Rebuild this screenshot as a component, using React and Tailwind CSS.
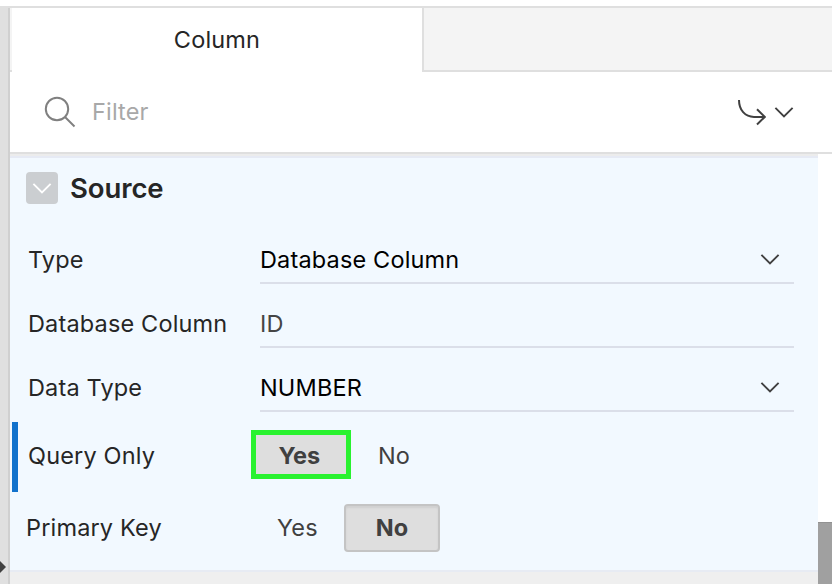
function Chevron({ className }) {
  return (
    <svg className={className} width="20" height="12" viewBox="0 0 20 12" fill="none" stroke="currentColor" strokeWidth="1.9">
      <path d="M1.4 1.8 10 10.4 18.6 1.8" />
    </svg>
  );
}

function FieldRow({ label, value, select, muted }) {
  return (
    <div className="flex h-16 pl-[18px] pr-6">
      <div className="w-[232px] shrink-0 pt-[24px] leading-8 text-[#262626]">{label}</div>
      <div className={`flex flex-1 justify-between border-b-2 border-[#dbdfe9] pt-[24px] leading-8 ${muted ? "text-[#454545]" : "text-black"}`}>
        <span>{value}</span>
        {select && <Chevron className="mr-[14px] mt-[9px] text-[#404040]" />}
      </div>
    </div>
  );
}

export default function App() {
  return (
    <div className="h-[584px] w-[832px] overflow-hidden bg-white pt-1.5 font-['Inter',sans-serif] text-[23.5px] font-[430] tracking-[0.16px] whitespace-nowrap">
      <div className="flex h-[578px] border-t-2 border-[#dfdfdf]">
        <div className="-mt-0.5 flex w-2 shrink-0 items-end bg-[#e0e0e0]">
          <svg width="8" height="28" viewBox="0 0 8 28" fill="#404040">
            <path d="M0 5 6 11 0 17Z" />
          </svg>
        </div>
        <div className="flex w-[824px] flex-col border-l-2 border-[#d0d0d0]">
          <div className="flex h-16 shrink-0">
            <div className="w-0.5 border-b-2 border-[#dfdfdf] bg-[#f4f4f4]" />
            <div className="w-[410px] pt-4 text-center leading-8 text-[#262626]">Column</div>
            <div className="flex-1 border-b-2 border-l-2 border-[#dfdfdf] bg-[#f4f4f4]" />
          </div>
          <div className="flex h-[82px] shrink-0 border-b-2 border-[#dfdfdf] pl-[34px]">
            <svg className="mt-6 shrink-0" width="32" height="32" viewBox="0 0 32 32" fill="none" stroke="#808080" strokeWidth="2">
              <circle cx="13" cy="13" r="11.2" />
              <path d="M21 21 30.5 30.5" />
            </svg>
            <span className="ml-4 mt-6 flex-1 leading-8 text-[#a8a8a8]">Filter</span>
            <svg className="mt-[27px]" width="30" height="28" viewBox="0 0 30 28" fill="none" stroke="#404040" strokeWidth="2">
              <path d="M3 1C3 11 9 17.9 18 17.9H29M21 10.3 28.8 17.9 21 25.5" />
            </svg>
            <Chevron className="mr-[38px] ml-[8px] mt-[34px] text-[#404040]" />
          </div>
          <div className="flex flex-1">
            <div className="flex w-[808px] flex-col border-t-2 border-[#ececec] bg-[#f2f9ff]">
              <div className="h-0.5 shrink-0 bg-[#e6eaf4]" />
              <div className="flex h-[62px] shrink-0 gap-3 pl-4 pt-3.5">
                <div className="flex size-8 items-center justify-center rounded-[4px] bg-[#cbced1] text-white">
                  <Chevron />
                </div>
                <h2 className="text-[27.5px] leading-8 font-[570] tracking-[-0.1px] text-[#262626]">Source</h2>
              </div>
              <FieldRow label="Type" value="Database Column" select />
              <FieldRow label="Database Column" value="ID" muted />
              <FieldRow label="Data Type" value="NUMBER" select />
              <div className="mt-2.5 flex h-[70px] shrink-0 pl-0.5">
                <div className="w-1.5 bg-[#1272cc]" />
                <span className="ml-2.5 w-[223.4px] pt-[18px] leading-8 text-[#262626]">Query Only</span>
                <div className="mt-2 h-[49px] w-[100px] border-[5px] border-[#29f22f] bg-[#dedede] pr-1 text-center leading-[41px] font-bold tracking-normal text-[#404040]">Yes</div>
                <span className="ml-[26.6px] pt-[18px] leading-8 text-[#404040]">No</span>
              </div>
              <div className="flex h-[78px] shrink-0 pl-4">
                <span className="w-[251px] pt-5 leading-8 text-[#262626]">Primary Key</span>
                <span className="w-[67px] pt-5 leading-8 text-[#404040]">Yes</span>
                <div className="mt-3 h-12 w-24 rounded-[4px] border-2 border-[#c4c4c4] bg-[#dedede] text-center leading-[44px] font-bold tracking-normal text-[#404040] shadow-[inset_0_2px_2px_#d0d0d0]">No</div>
              </div>
              <div className="flex-1 border-t-2 border-[#e7ebf3] bg-[#efefef]" />
            </div>
            <div className="flex flex-1 flex-col justify-end">
              <div className="h-[62px] border-t border-[#929292] bg-[#a0a0a0]" />
            </div>
          </div>
        </div>
      </div>
    </div>
  );
}
